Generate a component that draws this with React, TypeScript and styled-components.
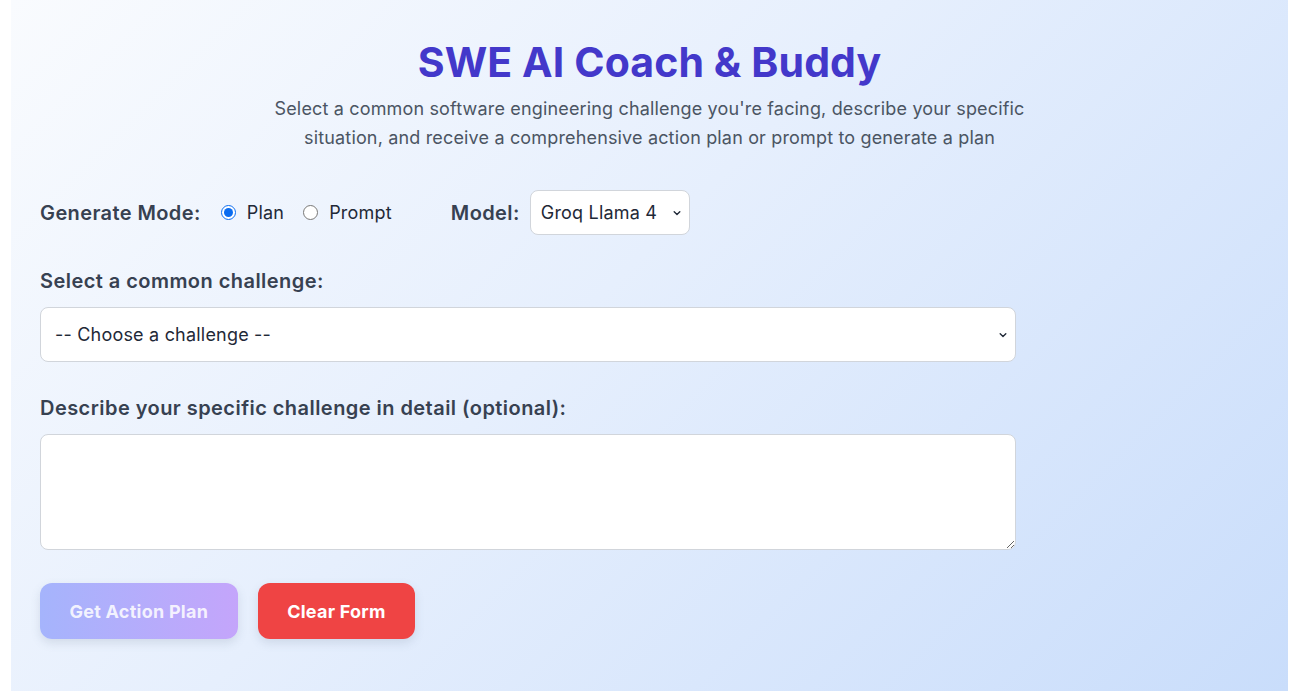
import React, { useState } from "react";
import styled, { createGlobalStyle } from "styled-components";

const GlobalStyle = createGlobalStyle`
  html, body {
    margin: 0;
    padding: 0;
    background: #ffffff;
    font-family: Inter, "Liberation Sans", sans-serif;
  }
  * {
    box-sizing: border-box;
  }
`;

const Page = styled.div`
  padding: 0 11px;
  min-height: 691px;
`;

const Panel = styled.main`
  min-height: 691px;
  padding: 37px 29px 40px 29px;
  background: linear-gradient(135deg, #f9fbfe 0%, #e6effd 45%, #c9ddfb 100%);
`;

const Header = styled.header`
  display: flex;
  flex-direction: column;
  align-items: center;
  text-align: center;
`;

const Title = styled.h1`
  margin: 0;
  font-size: 41px;
  line-height: 50px;
  font-weight: 700;
  letter-spacing: 0.1px;
  color: #4338ca;
`;

const Subtitle = styled.p`
  margin: 7px 0 0 0;
  max-width: 780px;
  font-size: 18px;
  line-height: 29px;
  letter-spacing: 0.16px;
  color: #4b5563;
`;

const Form = styled.form`
  width: 976px;
  margin-top: 38px;
  display: flex;
  flex-direction: column;
`;

const ModeRow = styled.div`
  display: flex;
  align-items: center;
  height: 45px;
`;

const Group = styled.div`
  display: flex;
  align-items: center;
`;

const InlineLabel = styled.span<{ $gap?: number }>`
  font-size: 20px;
  font-weight: 600;
  letter-spacing: 0.4px;
  color: #374151;
  margin-right: ${(p) => p.$gap ?? 10}px;
`;

const RadioLabel = styled.label`
  display: flex;
  align-items: center;
  gap: 11px;
  margin-right: 19px;
  font-size: 18px;
  letter-spacing: 0.2px;
  color: #1f2937;
  cursor: pointer;
`;

const Radio = styled.input`
  margin: 0;
  width: 15px;
  height: 15px;
  accent-color: #0a6cf0;
`;

const ModelGroup = styled(Group)`
  margin-left: 40px;
`;

const SelectWrap = styled.div<{ $full?: boolean }>`
  position: relative;
  width: ${(p) => (p.$full ? "100%" : "160px")};
`;

const Select = styled.select<{ $tall?: boolean }>`
  appearance: none;
  -webkit-appearance: none;
  width: 100%;
  height: ${(p) => (p.$tall ? "55px" : "45px")};
  padding: 0 ${(p) => (p.$tall ? "14px" : "10px")};
  border: 1px solid #d1d5db;
  border-radius: 8px;
  background: #ffffff;
  font-family: inherit;
  font-size: 18px;
  letter-spacing: 0.2px;
  color: #1f2937;
  outline: none;
`;

const Chevron = styled.svg`
  position: absolute;
  right: 8px;
  top: 50%;
  width: 10px;
  height: 10px;
  transform: translateY(-50%);
  pointer-events: none;
`;

const FieldLabel = styled.label<{ $top: number }>`
  display: block;
  font-size: 20px;
  line-height: 28px;
  font-weight: 600;
  letter-spacing: 0.45px;
  color: #374151;
  margin: ${(p) => p.$top}px 0 12px 0;
`;

const TextArea = styled.textarea`
  display: block;
  width: 100%;
  height: 116px;
  padding: 12px 14px;
  border: 1px solid #d1d5db;
  border-radius: 8px;
  background: #ffffff;
  font-family: inherit;
  font-size: 18px;
  outline: none;
`;

const Buttons = styled.div`
  display: flex;
  gap: 20px;
  margin-top: 33px;
`;

const Button = styled.button<{ $variant: "primary" | "danger" }>`
  height: 56px;
  padding: 0 29.5px;
  border: none;
  border-radius: 12px;
  font-family: inherit;
  font-size: 18px;
  font-weight: 700;
  letter-spacing: 0.25px;
  color: #ffffff;
  box-shadow: 0 4px 10px rgba(100, 116, 139, 0.18);
  cursor: pointer;
  background: ${(p) =>
    p.$variant === "primary"
      ? "linear-gradient(90deg, #a5b4fc, #c4a5fb)"
      : "#ef4444"};
  ${(p) => p.$variant === "primary" && "color: rgba(255,255,255,0.85);"}
`;

const ChevronIcon = () => (
  <Chevron viewBox="0 0 10 10">
    <path d="M2.2 3.8 L5 6.4 L7.8 3.8" fill="none" stroke="#1f2937" strokeWidth="1.4" strokeLinecap="round" strokeLinejoin="round" />
  </Chevron>
);

export default function App() {
  const [mode, setMode] = useState<"plan" | "prompt">("plan");
  return (
    <>
      <GlobalStyle />
      <Page>
        <Panel>
          <Header>
            <Title>SWE AI Coach &amp; Buddy</Title>
            <Subtitle>
              Select a common software engineering challenge you're facing, describe your specific
              situation, and receive a comprehensive action plan or prompt to generate a plan
            </Subtitle>
          </Header>
          <Form onSubmit={(e) => e.preventDefault()}>
            <ModeRow>
              <Group>
                <InlineLabel $gap={20}>Generate Mode:</InlineLabel>
                <RadioLabel>
                  <Radio type="radio" name="mode" checked={mode === "plan"} onChange={() => setMode("plan")} />
                  Plan
                </RadioLabel>
                <RadioLabel>
                  <Radio type="radio" name="mode" checked={mode === "prompt"} onChange={() => setMode("prompt")} />
                  Prompt
                </RadioLabel>
              </Group>
              <ModelGroup>
                <InlineLabel>Model:</InlineLabel>
                <SelectWrap>
                  <Select defaultValue="groq">
                    <option value="groq">Groq Llama 4</option>
                  </Select>
                  <ChevronIcon />
                </SelectWrap>
              </ModelGroup>
            </ModeRow>

            <FieldLabel $top={32}>Select a common challenge:</FieldLabel>
            <SelectWrap $full>
              <Select $tall defaultValue="">
                <option value="">-- Choose a challenge --</option>
              </Select>
              <ChevronIcon />
            </SelectWrap>

            <FieldLabel $top={32}>Describe your specific challenge in detail (optional):</FieldLabel>
            <TextArea />

            <Buttons>
              <Button type="submit" $variant="primary">Get Action Plan</Button>
              <Button type="button" $variant="danger">Clear Form</Button>
            </Buttons>
          </Form>
        </Panel>
      </Page>
    </>
  );
}
